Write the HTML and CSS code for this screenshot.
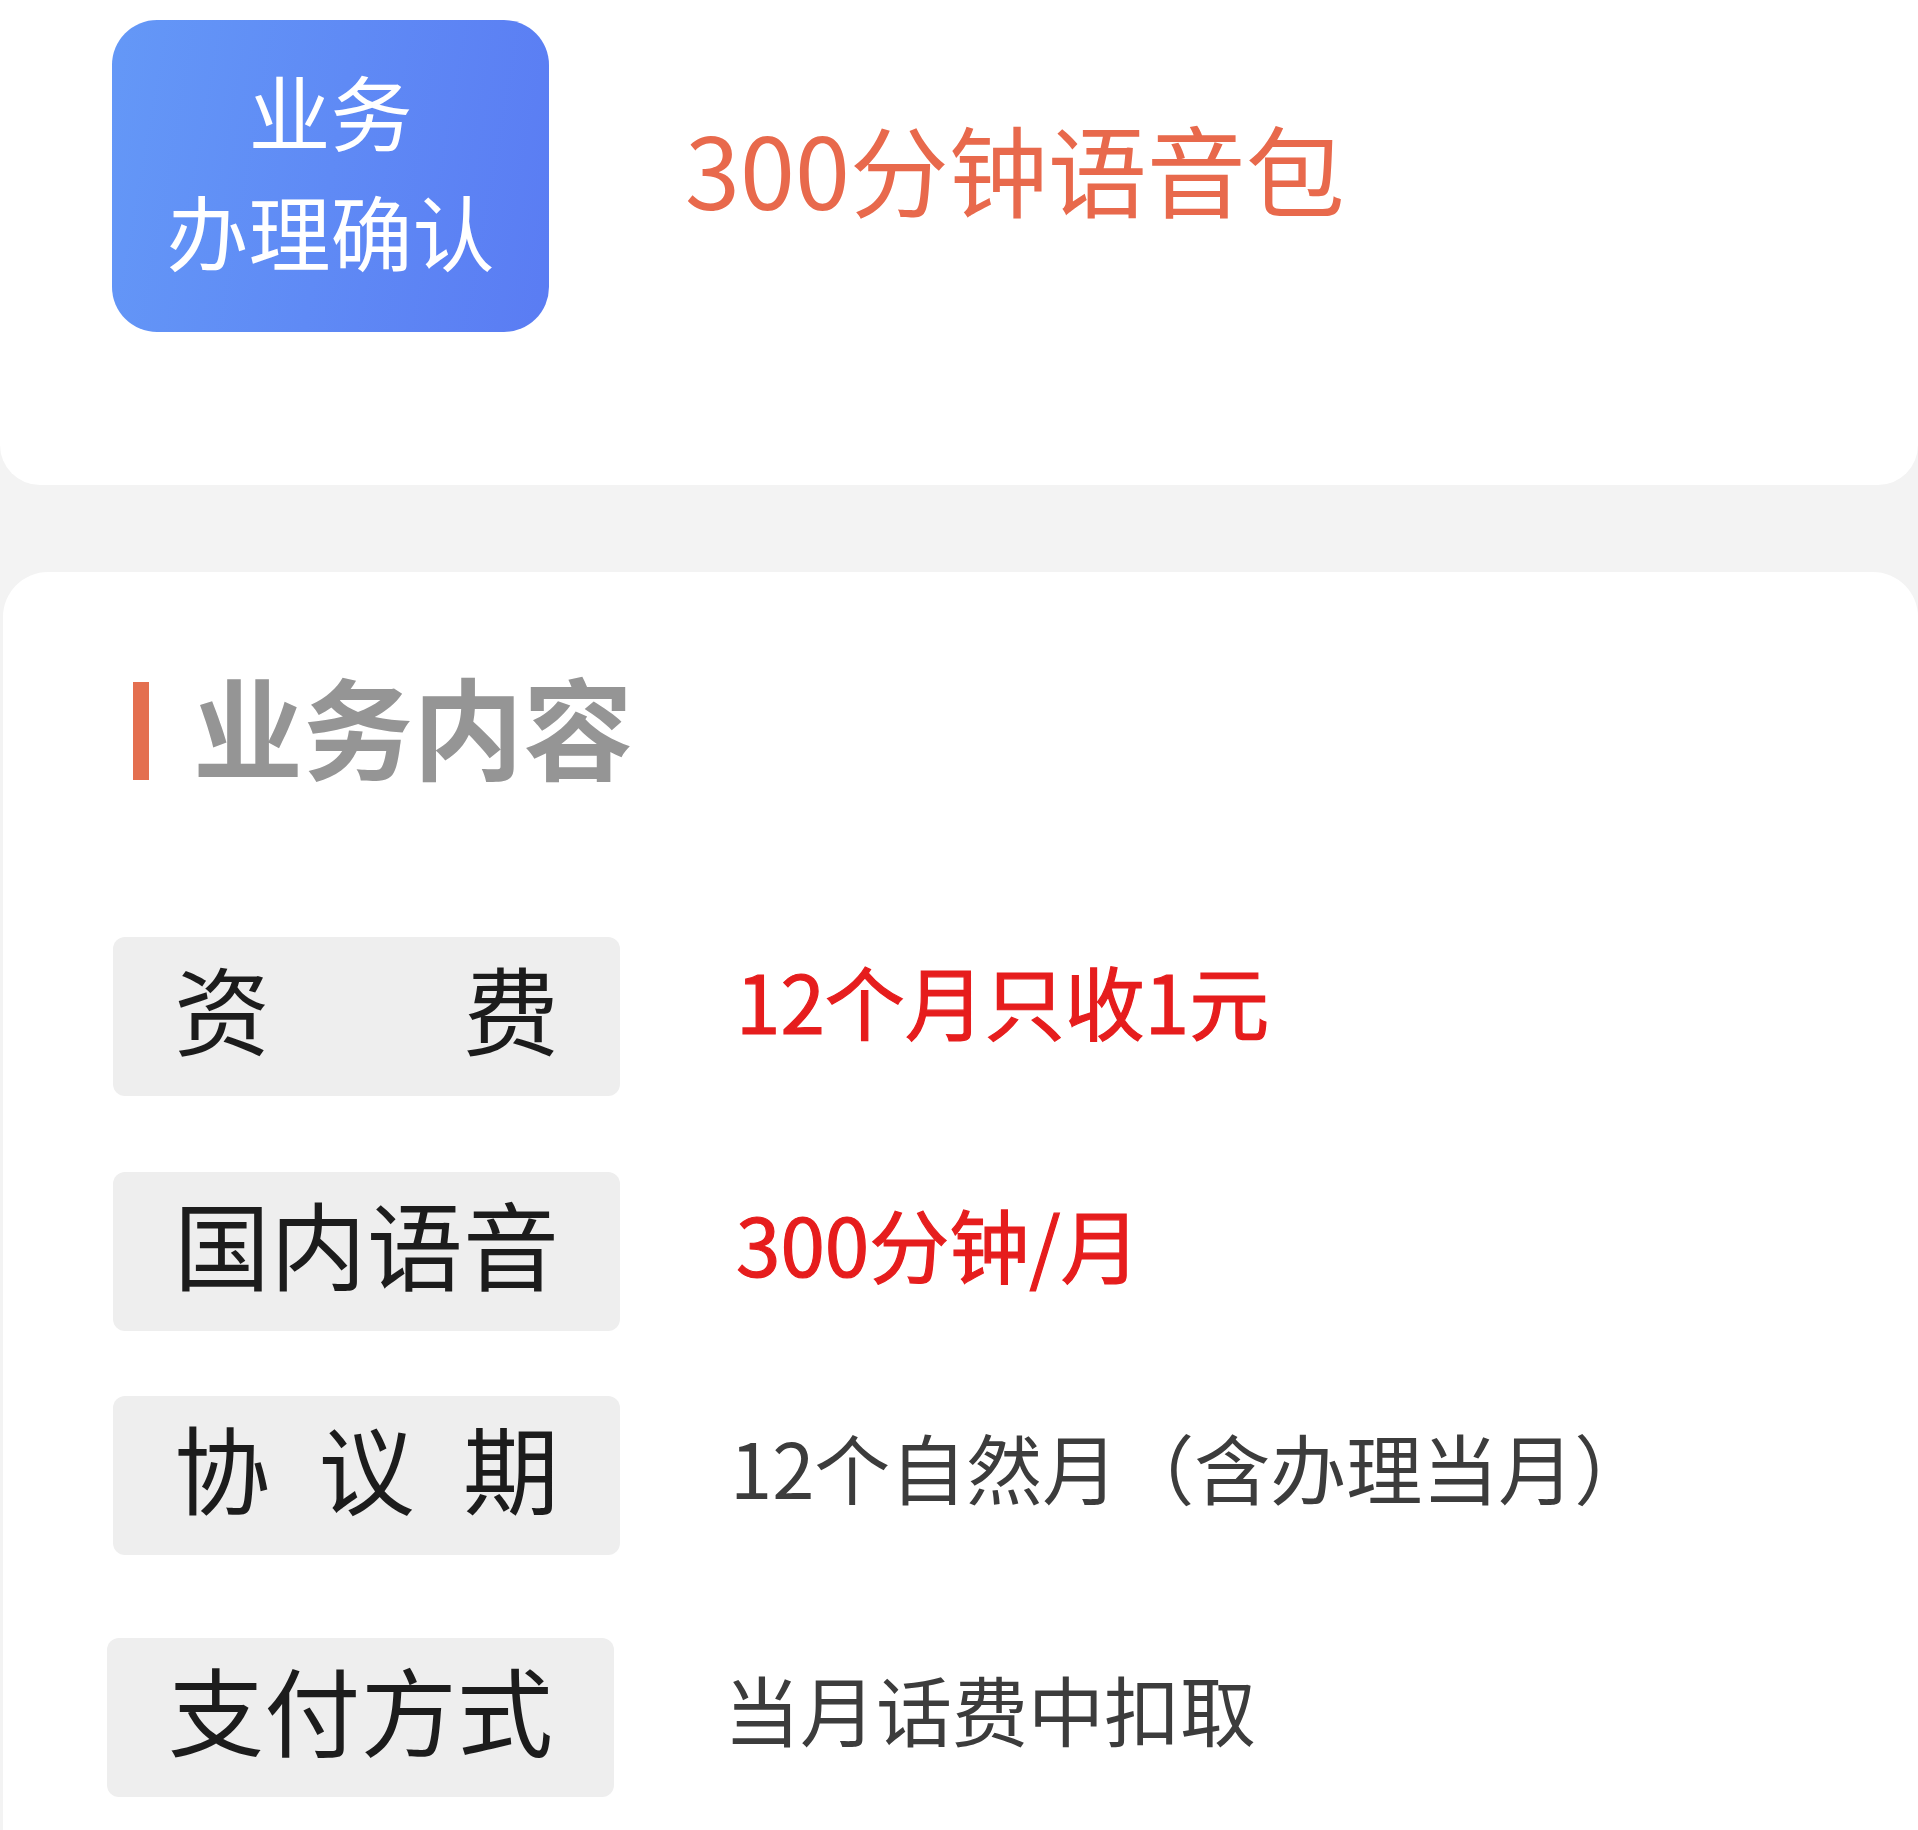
FILE: index.html
```html
<!DOCTYPE html>
<html lang="zh-CN">

<head>
    <meta charset="UTF-8">
    <title>业务办理确认</title>
    <link rel="stylesheet" href="styles.css">
</head>

<body>
    <div class="summary">
        <div class="badge">
            <span>业务</span>
            <span>办理确认</span>
        </div>
        <div class="product-name">300分钟语音包</div>
    </div>

    <div class="detail">
        <div class="section-title"><span>业务内容</span></div>

        <div class="fee-list">
            <div class="fee-row">
                <div class="fee-label">资 费</div>
                <div class="fee-value price lift">12个月只收1元</div>
            </div>
            <div class="fee-row">
                <div class="fee-label">国内语音</div>
                <div class="fee-value price">300分钟/月</div>
            </div>
            <div class="fee-row row-tight">
                <div class="fee-label">协 议 期</div>
                <div class="fee-value">12个自然月（含办理当月）</div>
            </div>
            <div class="fee-row row-last">
                <div class="fee-label">支付方式</div>
                <div class="fee-value">当月话费中扣取</div>
            </div>
        </div>
    </div>
</body>

</html>
```

FILE: styles.css
```css
/* 业务确认页 */
body {
    margin: 0;
    background: #f3f3f3;
    font-family: "Noto Sans CJK SC", "Noto Sans", sans-serif;
    height: 100vh;
    overflow: hidden;
}

/* 顶部卡片 */
.summary {
    background: #fff;
    height: 485px;
    box-sizing: border-box;
    padding: 20px 0 0 112px;
    border-radius: 0 0 40px 40px;
    display: flex;
    align-items: flex-start;
    gap: 136px;
}

.badge {
    width: 437px;
    height: 312px;
    box-sizing: border-box;
    padding-bottom: 12px;
    border-radius: 45px;
    background: linear-gradient(100deg, #6498f7 0%, #5a7cf3 100%);
    color: #fff;
    font-size: 82px;
    line-height: 120px;
    display: flex;
    flex-direction: column;
    align-items: center;
    justify-content: center;
}

.product-name {
    height: 312px;
    box-sizing: border-box;
    padding-bottom: 18px;
    display: flex;
    align-items: center;
    font-size: 99px;
    color: #e8694c;
}

/* 业务内容 */
.detail {
    background: #fff;
    margin: 87px 0 0 3px;
    height: 1258px;
    box-sizing: border-box;
    border-radius: 45px 45px 0 0;
    padding: 97px 0 0 110px;
}

.section-title {
    display: flex;
    align-items: flex-start;
    gap: 44px;
    margin-left: 20px;
    font-size: 110px;
    line-height: 110px;
    font-weight: 700;
    color: #959595;
}

.section-title::before {
    content: "";
    width: 16px;
    height: 98px;
    margin-top: 13px;
    background: #e46f4f;
}

.fee-list {
    margin-top: 157px;
    display: flex;
    flex-direction: column;
    gap: 76px;
}

.fee-row {
    display: flex;
    align-items: center;
    gap: 110px;
}

.fee-label {
    width: 507px;
    height: 159px;
    box-sizing: border-box;
    padding: 0 61px 19px;
    border-radius: 12px;
    background: #eeeeee;
    color: #1c1c1c;
    font-size: 96px;
    line-height: 140px;
    text-align: justify;
    text-align-last: justify;
}

.fee-value {
    font-size: 76px;
    padding-bottom: 19px;
    color: #3c3c3c;
}

.price {
    margin-left: 6px;
    font-size: 80px;
    color: #e61d1d;
    -webkit-text-stroke: 1.2px currentColor;
}

.lift {
    padding-bottom: 36px;
}

.row-tight {
    margin-top: -11px;
}

.row-last {
    margin-top: 7px;
    margin-left: -6px;
}
```
